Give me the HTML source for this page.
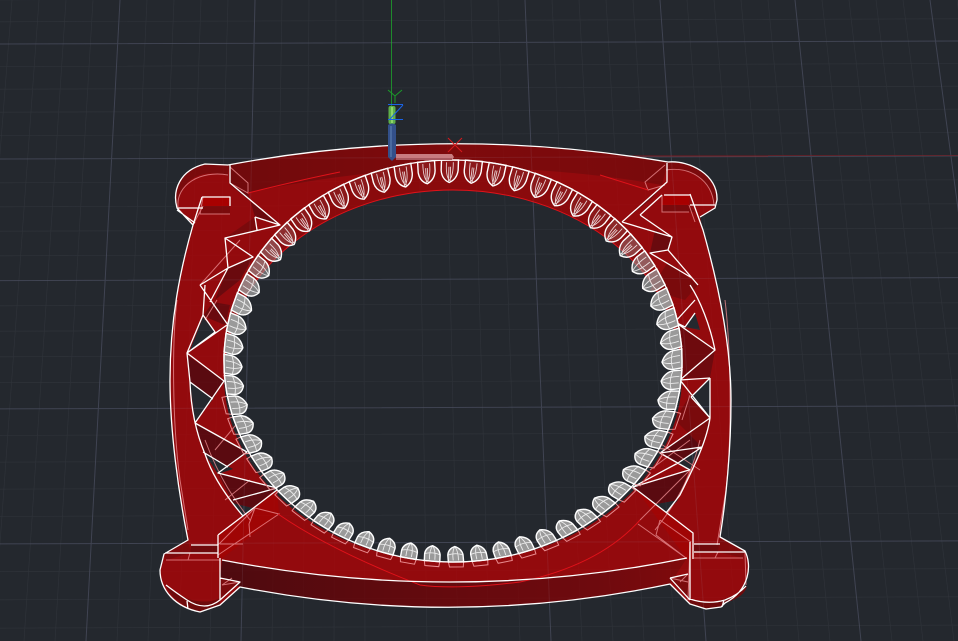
<!DOCTYPE html>
<html>
<head>
<meta charset="utf-8">
<style>
html,body{margin:0;padding:0;background:#24282e;width:958px;height:641px;overflow:hidden}
svg{display:block;position:absolute;left:0;top:0}
</style>
</head>
<body>
<svg id="s" width="958" height="641" viewBox="0 0 958 641" xmlns="http://www.w3.org/2000/svg" shape-rendering="geometricPrecision">
<defs>
<linearGradient id="wall" x1="222" x2="690" y1="0" y2="0" gradientUnits="userSpaceOnUse">
<stop offset="0" stop-color="#4e0a0f"/><stop offset=".5" stop-color="#660a0e"/><stop offset=".8" stop-color="#6e0a0e"/><stop offset="1" stop-color="#800a0c"/>
</linearGradient>
<linearGradient id="topb" x1="228" x2="665" y1="0" y2="0" gradientUnits="userSpaceOnUse">
<stop offset="0" stop-color="#700a0c"/><stop offset=".5" stop-color="#7e0a0c"/><stop offset="1" stop-color="#7a0a0c"/>
</linearGradient>
</defs>
<rect width="958" height="641" fill="#24282e"/>
<g id="grid" fill="none"></g>
<path d="M455 156H768" stroke="#7a1a20" stroke-width="1" fill="none"/>
<path d="M768 155.5H958" stroke="#5c2128" stroke-width="1" fill="none"/>
<path d="M391.5 0V106" stroke="#1e8a2c" stroke-width="1" fill="none"/>

<!-- body silhouette with holes -->
<path fill-rule="evenodd" fill="#930a0d" d="M228,165 Q446,124 668,162 C690,160 718,175 717,200 L715,208 L700,217 L703,230 C720,290 731,350 731,400 C731,450 726,500 720,537 L745,551 C752,565 750,590 725,603 L721,607 L706,609 L690,604 L670,584 Q456,629 240,587 L220,605 L200,612 C175,607 160,590 160,570 L164,554 L188,540 C178,490 170,430 170,380 C170,320 180,270 193,225 L177,208 C172,190 180,170 205,164 Z
M224,376 A229,186 0 1 0 682,376 A229,186 0 1 0 224,376 Z
M203,317 L215,332 L190,350 Z
M190,382 L213,399 L195,422 Z
M205,454 L233,469 L218,474 Z
M233,503 L253,508 L243,516 Z
M695,313 L685,327 L700,330 Z
M710,378 L710,418 L691,397 Z
M701,449 L677,462 L690,470 Z
M656,504 L678,500 L666,513 Z"/>

<!-- top band -->
<path fill="url(#topb)" d="M228,165 Q446,124 668,162 L662,185 Q450,148 248,193 L230,185 Z"/>
<path fill="#8a0a0c" d="M224,361 A229,201 0 0 1 682,361 L682,376 A229,186 0 0 0 224,376 Z"/>
<!-- ears dark rims -->
<path fill="#7a0a0c" d="M177,208 C172,190 180,170 205,164 L228,165 L228,176 C210,170 182,172 178,205 Z"/>
<path fill="#7a0a0c" d="M668,162 C690,160 718,175 717,200 L715,208 C712,180 690,166 666,170 Z"/>
<!-- blocks -->
<path fill="#a80000" d="M202,197 H230 V206 H203 Z"/>
<path fill="#7a0a0c" d="M203,206 H230 V214 H200 Z"/>
<path fill="#a80000" d="M664,195 H690 L689,205 H662 Z"/>
<path fill="#7a0a0c" d="M662,212 L662,205 H689 L695,212 Z"/>
<path fill="#6a0a0e" d="M230,185 L280,225 L255,217 L248,193 Z"/>
<path fill="#6a0a0e" d="M667,182 L622,222 L650,200 Z"/>
<!-- dark truss faces -->
<g fill="#5a0a10">
<path d="M187,355 L224,381 L213,399 L190,382 Z"/>
<path d="M195,423 L247,452 L228,467 L205,453 Z"/>
<path d="M218,473 L277,488 L253,508 L233,503 Z"/>
<path fill="#6a0a0e" d="M213,302 L230,305 L225,325 L203,316 Z"/>
<path fill="#7a0a0c" d="M255,217 L257,230 L225,238 Z"/>
<path fill="#6a0a0e" d="M228,268 L253,257 L240,280 L215,300 Z"/>
<path fill="#6e0a0e" d="M677,322 L715,350 L710,378 L681,378 Z"/>
<path d="M710,418 L660,453 L678,463 L702,447 Z"/>
<path d="M633,487 L689,470 L678,500 L656,504 Z"/>
<path fill="#6a0a0e" d="M672,237 L668,250 L650,253 L655,230 Z"/>
<path fill="#7a0a0c" d="M690,395 L710,418 L702,447 L675,420 Z"/>
<path fill="#7a0a0c" d="M668,262 L698,285 L685,300 L650,290 Z"/>
</g>
<!-- bottom walls and plates -->
<path fill="url(#wall)" d="M222,560 Q456,605 687,558 L670,584 Q456,629 240,587 L220,578 Z"/>
<path fill="#a00505" d="M218,535 L277,490 L279,514 L220,560 Z"/>
<path fill="#a00505" d="M638,492 L693,533 L694,559 L686,558 Z"/>
<path fill="#6e0a0c" d="M191,545 H218 V553 H190 Z"/>
<path fill="#7e0a0c" d="M164,554 L188,540 L191,553 L166,560 Z"/>
<path fill="#6e0a0c" d="M694,544 H720 L718,552 H694 Z"/>
<path fill="#7e0a0c" d="M720,537 L745,551 L743,558 L718,552 Z"/>
<path fill="#6e0a0c" d="M220,598 C205,606 180,600 166,585 C170,598 185,608 200,612 L220,605 Z"/>
<path fill="#6e0a0c" d="M690,600 C710,606 735,598 747,586 C745,595 735,600 725,603 L721,607 L706,609 L690,604 Z"/>
<path fill="#7a0a0c" d="M220,578 L240,582 L220,600 Z"/>
<path fill="#7a0a0c" d="M670,580 L688,574 L690,600 Z"/>

<g id="gridover" fill="none"></g>

<!-- pink wires -->
<path fill="none" stroke="#e88a8e" stroke-opacity=".8" stroke-width="1" d="M230,167 L248,183 V193 L230,183 M178,207 C176,185 200,170 228,175 M203,206 L193,225 M230,214 H200 L203,197 M665,165 L645,182 L648,190 L665,185 M666,170 C690,166 712,180 714,205 M662,195 L662,212 H689 M689,205 L695,222
M177,300 C172,340 172,420 180,480 L188,530 M725,300 C731,350 732,440 726,490 L717,545
M218,555 L279,514 L255,508 L218,545 M249,524 L250,537 M255,508 L249,524 M220,544 H243 M166,560 H220 M190,553 L188,560
M660,520 L691,542 M660,520 L656,535 L686,558 M638,524 L686,558 M690,544 L688,600 M694,558 H743 M745,552 L746,585 M718,552 L715,558
M222,585 L232,578 M222,585 L240,582 M670,578 L688,582 M688,574 L680,582
M217,300 L205,320 M240,420 L215,450 M250,480 L225,500 M205,440 C220,480 235,500 250,520
M682,420 L690,395 M655,440 L700,470 M650,470 L690,440 M640,520 L690,470 M700,440 C690,480 675,505 655,530 
M200,285 L240,240"/>
<!-- red wires -->
<path fill="none" stroke="#e0121a" stroke-width="1" d="M248,193 Q300,180 340,172 M224,376 A229,186 0 0 1 682,376 M278,514 Q330,550 420,585 Q456,590 520,582 Q600,565 640,520 M648,190 L600,175"/>
<!-- white wires -->
<path fill="none" stroke="#ffffff" stroke-width="1.3" stroke-linejoin="round" d="M228,165 Q446,124 668,162 C690,160 718,175 717,200 L715,208 L700,217 M228,165 L205,164 C180,170 172,190 177,208 L193,225 C180,270 170,320 170,380 C170,430 178,490 188,540 L164,554 L160,570 C160,590 175,607 200,612 L220,605 L240,587 Q456,629 670,584 L690,604 L706,609 L721,607 L725,603 C750,590 752,565 745,551 L720,537 C726,500 731,450 731,400 C731,350 720,290 703,230 L690,194
M230,165 V183 L280,225 L255,217 M202,197 H230 V206 M202,197 L193,225 M177,208 H203 M177,210 L195,223
M664,195 H690 M690,205 H715 M667,163 V182 L622,222 M662,195 L640,215
M280,225 L225,238 L228,268 L200,285 M225,238 L253,257 L228,268 M200,285 L228,325 M228,268 L210,302 M255,217 L257,230
M203,315 L215,332 L187,353 L227,325 M187,353 L224,381 L195,423 L247,452 L218,473 L277,488 L233,500 M190,382 L213,399 M203,452 L228,467
M205,285 L203,315 L187,353 C188,362 189,372 190,382 C191,410 197,435 205,454 C212,475 225,495 243,516
M218,535 L277,490 M218,535 V558 M222,560 Q456,605 687,558 M220,558 V600 M191,545 H218 M165,553 H218 M220,578 L240,582 L220,600
M633,487 L693,533 V559 M694,544 H720 M694,552 H745 M690,542 L690,600 M670,578 L688,574 M670,578 L690,600 M724,600 L722,607 M690,599 Q708,605 725,600 Q738,595 746,586
M166,585 Q175,592 187,600 Q205,612 220,600 M187,601 L188,609
M672,237 L622,222 M640,215 L672,237 L668,250 L698,285 M668,250 L650,253 L692,278 M695,300 L675,322 L715,350 L680,380 L710,418 L660,453 L702,447 L678,463 L633,487 M675,322 L685,327 L695,313 M680,380 L710,378 M691,397 L710,378
M710,418 L691,397 M689,470 L633,487 M660,453 L690,470
M690,285 C700,300 710,325 715,350 M710,378 L710,418 C707,440 695,465 680,495 L666,513"/>
<g id="teeth"></g>
<ellipse id="rim" cx="453" cy="361" rx="229" ry="201" fill="none" stroke="#fff" stroke-width="1.3"/>

<!-- gizmo -->
<g fill="none">
<path d="M388,90 L395,96 L402,90 M395,96 V103" stroke="#1c9a2a" stroke-width="1"/>
<rect x="388.5" y="106" width="7" height="18" rx="2" fill="#5fb04a"/>
<rect x="391" y="107" width="2" height="16" fill="#8fd46a"/>
<path d="M388,104.5 H403 M388,119.5 H403 M403,105 L390,119" stroke="#1a63e6" stroke-width="1"/>
<path d="M388,125 Q392,122 396,125 V157 L392,161 L388,157 Z" fill="#33508a"/>
<rect x="390" y="126" width="2" height="31" fill="#4a6aa0"/>
<path d="M396,154 H452 L454,157 L452,160 H396 Z" fill="#c87c80"/>
<path d="M396,158 H452 V160 H396 Z" fill="#a85a60"/>
<path d="M448,138 L462,152 M462,138 L448,152" stroke="#d81a1e" stroke-width="1"/>
</g>
</svg>
<script>
(function(){
var NS='http://www.w3.org/2000/svg';
function el(parent,name,attrs){var e=document.createElementNS(NS,name);for(var k in attrs)e.setAttribute(k,attrs[k]);parent.appendChild(e);return e;}
var minor='',major='';
for(var k=-20;k<=25;k++){
  var x0=390+27*k,x1=396+31*k;
  var d='M'+x0+',0L'+x1+',641';
  if(k===0) continue;
  if(((k%5)+5)%5===0) major+=d; else minor+=d;
}
for(var n=-2;n<=24;n++){
  var y=44+22.33*n+0.1333*n*n;
  var d2='M0,'+y.toFixed(1)+'L958,'+(y-3).toFixed(1);
  if(((n%5)+5)%5===0) major+=d2; else minor+=d2;
}
var g=document.getElementById('grid');
el(g,'path',{d:minor,stroke:'#2a2e35','stroke-width':.8});
el(g,'path',{d:major,stroke:'#343845','stroke-width':1});
var o=document.getElementById('gridover');
el(o,'path',{d:minor,stroke:'#ffffff','stroke-opacity':.02,'stroke-width':.8});
el(o,'path',{d:major,stroke:'#b0b4d0','stroke-opacity':.1,'stroke-width':1});
var T=document.getElementById('teeth');
for(var i=0;i<60;i++){
  var a=(0.75+6*i)*Math.PI/180,s=Math.sin(a),c=Math.cos(a);
  var bx=453+229*s,by=361+201*c,tx=452+210*s,ty=364.5+182*c;
  var ux=229*c,uy=-201*s,l=Math.sqrt(ux*ux+uy*uy);ux/=l;uy/=l;
  var hw=c>0?(7.6+1.8*Math.abs(s)):(9.4-.9*Math.abs(c));
  var m='matrix('+[(ux*hw).toFixed(3),(uy*hw).toFixed(3),(tx-bx).toFixed(3),(ty-by).toFixed(3),bx.toFixed(2),by.toFixed(2)].join(' ')+')';
  var op;
  if(by>300) op=1; else if(by<215) op=.1; else op=.1+.9*(by-215)/85;
  var G=el(T,'g',{transform:m});
  if(c>0.2) el(G,'path',{d:'M-1,0L-.9,-.32L.9,-.32L1,0',fill:'none',stroke:'#e88a8e','stroke-width':1,'vector-effect':'non-scaling-stroke'});
  el(G,'path',{d:'M-1,0L-1,.45Q-.9,.85 0,1Q.9,.85 1,.45L1,0Z',fill:'#9a9a9a','fill-opacity':op,stroke:'#fff','stroke-width':1.4,'vector-effect':'non-scaling-stroke'});
  el(G,'path',{d:by<250?'M-.4,.1Q-.45,.7 0,.9Q.45,.7 .4,.1M-.1,.3V.95M.1,.3V.95':'M-.35,.1Q-.42,.7 0,1M.35,.1Q.42,.7 0,1M-1,.45Q0,.62 1,.45',fill:'none',stroke:'#fff','stroke-opacity':.8,'stroke-width':.9,'vector-effect':'non-scaling-stroke'});
}
})();
</script>
</body>
</html>
